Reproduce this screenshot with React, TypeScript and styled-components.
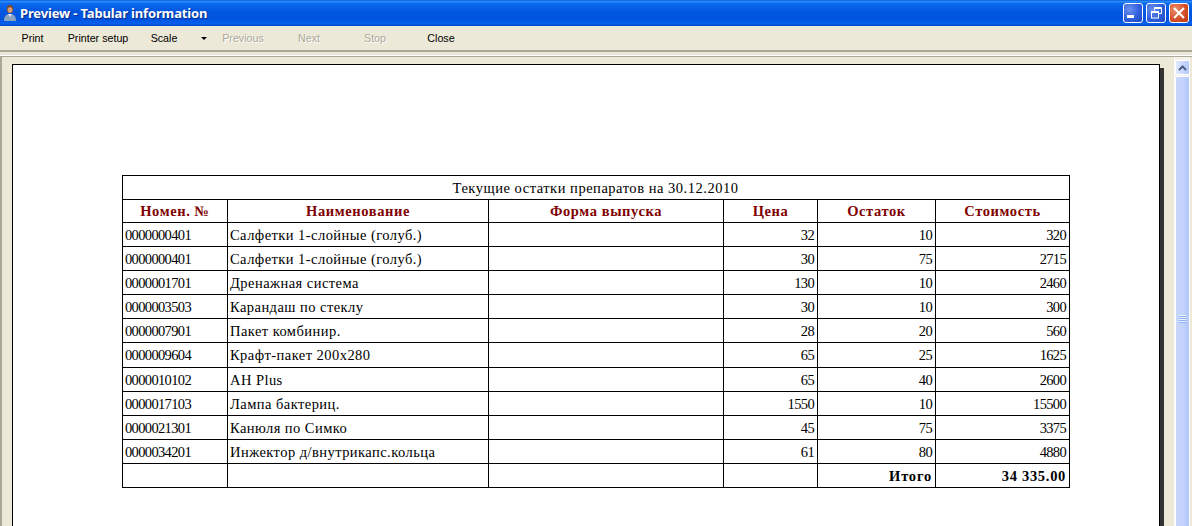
import React from "react";
import styled, { createGlobalStyle } from "styled-components";

const Global = createGlobalStyle`
  html, body { margin: 0; padding: 0; height: 100%; overflow: hidden; background: #ece9d8; }
  #root { height: 100%; }
`;

const Window = styled.div`
  width: 1192px; height: 526px; display: flex; flex-direction: column; overflow: hidden;
  background: #ece9d8;
`;
const TitleBar = styled.header`
  height: 26px; flex: none; display: flex; align-items: center; padding: 0 3px; box-sizing: border-box;
  background: linear-gradient(180deg, #0a5be0 0%, #2b8cf8 6%, #0a68ee 14%, #0256e0 45%, #0053df 75%, #0660ee 90%, #0349c8 100%);
`;
const TitleIcon = styled.svg`
  width: 16px; height: 18px; flex: none; margin-right: 1px;
`;
const TitleText = styled.span`
  flex: 1; font: bold 13px "Noto Sans", "Liberation Sans", sans-serif; color: #fff;
  text-shadow: 1px 1px 1px #0a2a8a; letter-spacing: -0.15px;
`;
const WinButtons = styled.div`display: flex; gap: 3px;`;
const WinButton = styled.button<{ $close?: boolean }>`
  width: 20px; height: 20px; padding: 0; box-sizing: border-box; border: 1px solid #fff; border-radius: 3px;
  display: flex; align-items: center; justify-content: center;
  background: ${(p) => p.$close
    ? "radial-gradient(circle at 30% 30%, #eb8f70 0%, #d9542f 50%, #b8340f 100%)"
    : "radial-gradient(circle at 30% 30%, #6d90f0 0%, #2f5fdc 55%, #1f46c0 100%)"};
`;
const Toolbar = styled.nav`
  height: 24px; flex: none; display: flex; align-items: center; box-sizing: border-box;
  background: #ece9d8;
`;
const ToolButton = styled.span<{ $disabled?: boolean }>`
  width: 66px; flex: none; text-align: center; font: 10.7px "Liberation Sans", Arial, sans-serif;
  color: ${(p) => (p.$disabled ? "#aca899" : "#000")};
  text-shadow: ${(p) => (p.$disabled ? "1px 1px 0 #fff" : "none")};
  &:first-child { width: 65px; }
`;
const Caret = styled.span`
  width: 13px; flex: none; display: flex; justify-content: center;
  &::before { content: ""; border: 3px solid transparent; border-top: 3px solid #000; border-bottom: 0; }
`;
const Divider = styled.div`
  height: 3px; flex: none; background: #ece9d8; border-top: 2px solid #aca899; border-bottom: 1px solid #fff;
`;
const Body = styled.div`
  flex: 1; min-height: 0; display: flex; overflow: hidden;
  border-left: 2px solid #aca899; border-top: 1px solid #aca899;
`;
const Viewport = styled.main`
  flex: 1; min-width: 0; padding: 7px 14px 0 10px; overflow: hidden; background: #ece9d8;
`;
const Page = styled.section`
  height: 600px; box-sizing: border-box; border: 1px solid #000; background: #fff; box-shadow: 4px 4px 0 #333;
  padding: 110px 0 0 109px;
`;
const Sheet = styled.table`
  width: 947px; border-collapse: collapse; table-layout: fixed;
  font: 14.5px "Liberation Serif", "Times New Roman", serif; color: #000;
`;
const Cell = styled.td<{ $align?: string; $bold?: boolean; $spacing?: number }>`
  border: 1px solid #000; padding: 1px 3px 0 2px; box-sizing: border-box; white-space: nowrap; overflow: hidden;
  text-align: ${(p) => p.$align || "left"};
  font-weight: ${(p) => (p.$bold ? "bold" : "normal")};
  letter-spacing: ${(p) => p.$spacing ?? -0.65}px;
`;
const Head = styled.th`
  border: 1px solid #000; padding: 1px 2px 0; box-sizing: border-box; color: #800000; font-weight: bold; text-align: center;
  letter-spacing: 0.6px;
`;
const Row = styled.tr<{ $h?: number }>`height: ${(p) => p.$h || 24}px;`;
const Scrollbar = styled.aside`
  width: 15px; flex: none; margin-right: 2px; padding-top: 3px; background: #f3f1e8; display: flex; flex-direction: column; gap: 1px;
  border-left: 1px solid #fff;
`;
const ScrollUp = styled.div`
  height: 15px; flex: none; display: flex; align-items: center; justify-content: center; box-sizing: border-box;
  border: 1px solid #fff; border-radius: 2px; background: linear-gradient(90deg, #e1eafe, #c1d2fc 70%, #b4c8f6);
`;
const Thumb = styled.div`
  height: 486px; flex: none; display: flex; align-items: center; justify-content: center; box-sizing: border-box;
  border: 1px solid #fff; border-radius: 2px; background: linear-gradient(90deg, #c9d7fb, #c3d4fd 50%, #b1c6f8);
`;
const Grip = styled.div`
  width: 7px; height: 8px; background: repeating-linear-gradient(180deg, #eef4fe 0 1px, #8cb0f8 1px 2px);
`;

const rows = [
  ["0000000401", "Салфетки 1-слойные (голуб.)", "32", "10", "320"],
  ["0000000401", "Салфетки 1-слойные (голуб.)", "30", "75", "2715"],
  ["0000001701", "Дренажная система", "130", "10", "2460"],
  ["0000003503", "Карандаш по стеклу", "30", "10", "300"],
  ["0000007901", "Пакет комбинир.", "28", "20", "560"],
  ["0000009604", "Крафт-пакет 200х280", "65", "25", "1625"],
  ["0000010102", "AH Plus", "65", "40", "2600"],
  ["0000017103", "Лампа бактериц.", "1550", "10", "15500"],
  ["0000021301", "Канюля по Симко", "45", "75", "3375"],
  ["0000034201", "Инжектор д/внутрикапс.кольца", "61", "80", "4880"],
];
const cols = [105, 261, 235, 94, 118, 134];
const heads = ["Номен. №", "Наименование", "Форма выпуска", "Цена", "Остаток", "Стоимость"];

export default function App() {
  return (
    <Window>
      <Global />
      <TitleBar>
        <TitleIcon viewBox="0 0 16 18">
          <ellipse cx="7" cy="5" rx="3.2" ry="4" fill="#7a4a2a" />
          <ellipse cx="7" cy="6" rx="2.4" ry="2.8" fill="#d8a070" />
          <path d="M1 17 C1 11 4 10 7 10 C10 10 13 11 13 17 Z" fill="#8aa4c0" />
          <path d="M5 10 L7 13 L9 10 Z" fill="#dfe6ee" />
        </TitleIcon>
        <TitleText>Preview - Tabular information</TitleText>
        <WinButtons>
          <WinButton aria-label="Minimize">
            <svg width="14" height="14" viewBox="0 0 14 14"><rect x="1" y="9" width="7" height="3" fill="#fff" /></svg>
          </WinButton>
          <WinButton aria-label="Restore">
            <svg width="14" height="14" viewBox="0 0 14 14" fill="none" stroke="#fff"><path d="M5.5 4.5V1.5H12.5V7.5H10" /><path d="M5.5 2.5H12.5" /><rect x="2.5" y="5.5" width="7" height="6.5" /><path d="M2.5 6.5H9.5" /></svg>
          </WinButton>
          <WinButton $close aria-label="Close">
            <svg width="14" height="14" viewBox="0 0 14 14" stroke="#fff" strokeWidth="2"><path d="M2 2L12 12M12 2L2 12" /></svg>
          </WinButton>
        </WinButtons>
      </TitleBar>
      <Toolbar>
        <ToolButton>Print</ToolButton>
        <ToolButton>Printer setup</ToolButton>
        <ToolButton>Scale</ToolButton>
        <Caret />
        <ToolButton $disabled>Previous</ToolButton>
        <ToolButton $disabled>Next</ToolButton>
        <ToolButton $disabled>Stop</ToolButton>
        <ToolButton>Close</ToolButton>
      </Toolbar>
      <Divider />
      <Body>
        <Viewport>
          <Page>
            <Sheet>
              <colgroup>{cols.map((w, i) => <col key={i} width={w} />)}</colgroup>
              <tbody>
                <Row><Cell colSpan={6} $align="center" $spacing={0.52}>Текущие остатки препаратов на 30.12.2010</Cell></Row>
                <Row $h={23}>{heads.map((h) => <Head key={h}>{h}</Head>)}</Row>
                {rows.map((r, i) => (
                  <Row key={i} $h={i === 5 ? 25 : 24}>
                    <Cell>{r[0]}</Cell>
                    <Cell $spacing={0.45}>{r[1]}</Cell>
                    <Cell />
                    <Cell $align="right">{r[2]}</Cell>
                    <Cell $align="right">{r[3]}</Cell>
                    <Cell $align="right">{r[4]}</Cell>
                  </Row>
                ))}
                <Row>
                  <Cell /><Cell /><Cell /><Cell />
                  <Cell $align="right" $bold $spacing={0.8}>Итого</Cell>
                  <Cell $align="right" $bold $spacing={0.7}>34 335.00</Cell>
                </Row>
              </tbody>
            </Sheet>
          </Page>
        </Viewport>
        <Scrollbar>
          <ScrollUp>
            <svg width="9" height="6" viewBox="0 0 9 6" fill="none" stroke="#4d6185" strokeWidth="2"><path d="M1 5L4.5 1.5L8 5" /></svg>
          </ScrollUp>
          <Thumb><Grip /></Thumb>
        </Scrollbar>
      </Body>
    </Window>
  );
}
